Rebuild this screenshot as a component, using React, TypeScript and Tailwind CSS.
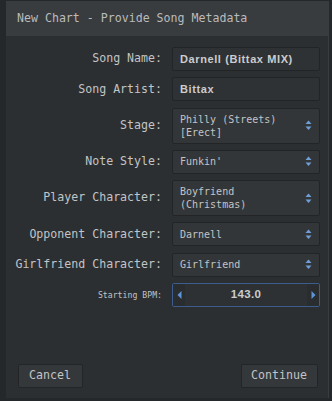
import React from "react";

const mono = { fontFamily: '"DejaVu Sans Mono", "Liberation Mono", monospace' };
const bold = { fontFamily: '"Liberation Sans", "DejaVu Sans", sans-serif' };

function Arrows() {
  return (
    <svg width="7" height="11" viewBox="0 0 7 11" className="shrink-0">
      <path d="M3.5 0.5 L6.5 4 L0.5 4 Z" fill="#6f9fd6" />
      <path d="M0.5 6.5 L6.5 6.5 L3.5 10 Z" fill="#6f9fd6" />
    </svg>
  );
}

function Label({ children, small }: { children: React.ReactNode; small?: boolean }) {
  return (
    <div
      className={`text-right text-[#c2c4c6] ${small ? "text-[8.2px]" : "text-[11.6px]"} leading-none`}
      style={mono}
    >
      {children}
    </div>
  );
}

function TextBox({ value }: { value: string }) {
  return (
    <div className="h-[24px] bg-[#2f3234] border border-[#222426] rounded-[2px] flex items-center pl-[7px]">
      <span className="text-[11px] font-bold text-[#cbcccd] tracking-[0.6px]" style={bold}>
        {value}
      </span>
    </div>
  );
}

function Select({ lines }: { lines: string[] }) {
  const tall = lines.length > 1;
  return (
    <div
      className={`${tall ? "h-[36px]" : "h-[24px]"} bg-[#333639] border border-[#222426] rounded-[2px] flex items-center pl-[7px] pr-[7px]`}
    >
      <div className="flex-1 text-[10px] leading-[13px] text-[#c2c4c6]" style={mono}>
        {lines.map((l) => (
          <div key={l}>{l}</div>
        ))}
      </div>
      <Arrows />
    </div>
  );
}

export default function App() {
  return (
    <div className="w-[332px] h-[401px] bg-[#25282a] pl-[6px] pt-[1px] pr-[3px] pb-[3px] flex">
      <div className="flex-1 flex flex-col bg-[#2c2f31] border-r border-[#3a3d40]">
        <div className="h-[35px] bg-[#393c3f] flex items-center pl-[11px] shrink-0">
          <span className="text-[11.6px] text-[#b9bbbd]" style={mono}>
            New Chart - Provide Song Metadata
          </span>
        </div>
        <div className="grid grid-cols-[156px_148px] gap-x-[10px] gap-y-[6.3px] items-center pt-[11px]">
          <Label>Song Name:</Label>
          <TextBox value="Darnell (Bittax MIX)" />
          <Label>Song Artist:</Label>
          <TextBox value="Bittax" />
          <Label>Stage:</Label>
          <Select lines={["Philly (Streets)", "[Erect]"]} />
          <Label>Note Style:</Label>
          <Select lines={["Funkin'"]} />
          <Label>Player Character:</Label>
          <Select lines={["Boyfriend", "(Christmas)"]} />
          <Label>Opponent Character:</Label>
          <Select lines={["Darnell"]} />
          <Label>Girlfriend Character:</Label>
          <Select lines={["Girlfriend"]} />
          <Label small>Starting BPM:</Label>
          <div className="h-[24px] border border-[#3d5e8c] rounded-[2px] flex items-stretch bg-[#2e3133]">
            <div className="w-[12px] bg-[#2a2d2f] flex items-center justify-center">
              <svg width="5" height="8" viewBox="0 0 5 8">
                <path d="M4.5 0 L4.5 8 L0.5 4 Z" fill="#5d95d6" />
              </svg>
            </div>
            <div className="flex-1 flex items-center justify-center">
              <span className="text-[11.5px] font-bold text-[#cbcccd] tracking-[0.3px]" style={bold}>
                143.0
              </span>
            </div>
            <div className="w-[12px] bg-[#2a2d2f] flex items-center justify-center">
              <svg width="5" height="8" viewBox="0 0 5 8">
                <path d="M0.5 0 L0.5 8 L4.5 4 Z" fill="#5d95d6" />
              </svg>
            </div>
          </div>
        </div>
        <div className="flex-1" />
        <div className="flex justify-between pl-[11.5px] pr-[10.5px] pb-[10px]">
          <div
            className="h-[24px] w-[65px] bg-[#35383b] border border-[#232527] rounded-[2px] flex items-center justify-center text-[11.6px] text-[#c2c4c6]"
            style={mono}
          >
            Cancel
          </div>
          <div
            className="h-[24px] w-[77px] bg-[#35383b] border border-[#232527] rounded-[2px] flex items-center justify-center text-[11.6px] text-[#c2c4c6]"
            style={mono}
          >
            Continue
          </div>
        </div>
      </div>
    </div>
  );
}
